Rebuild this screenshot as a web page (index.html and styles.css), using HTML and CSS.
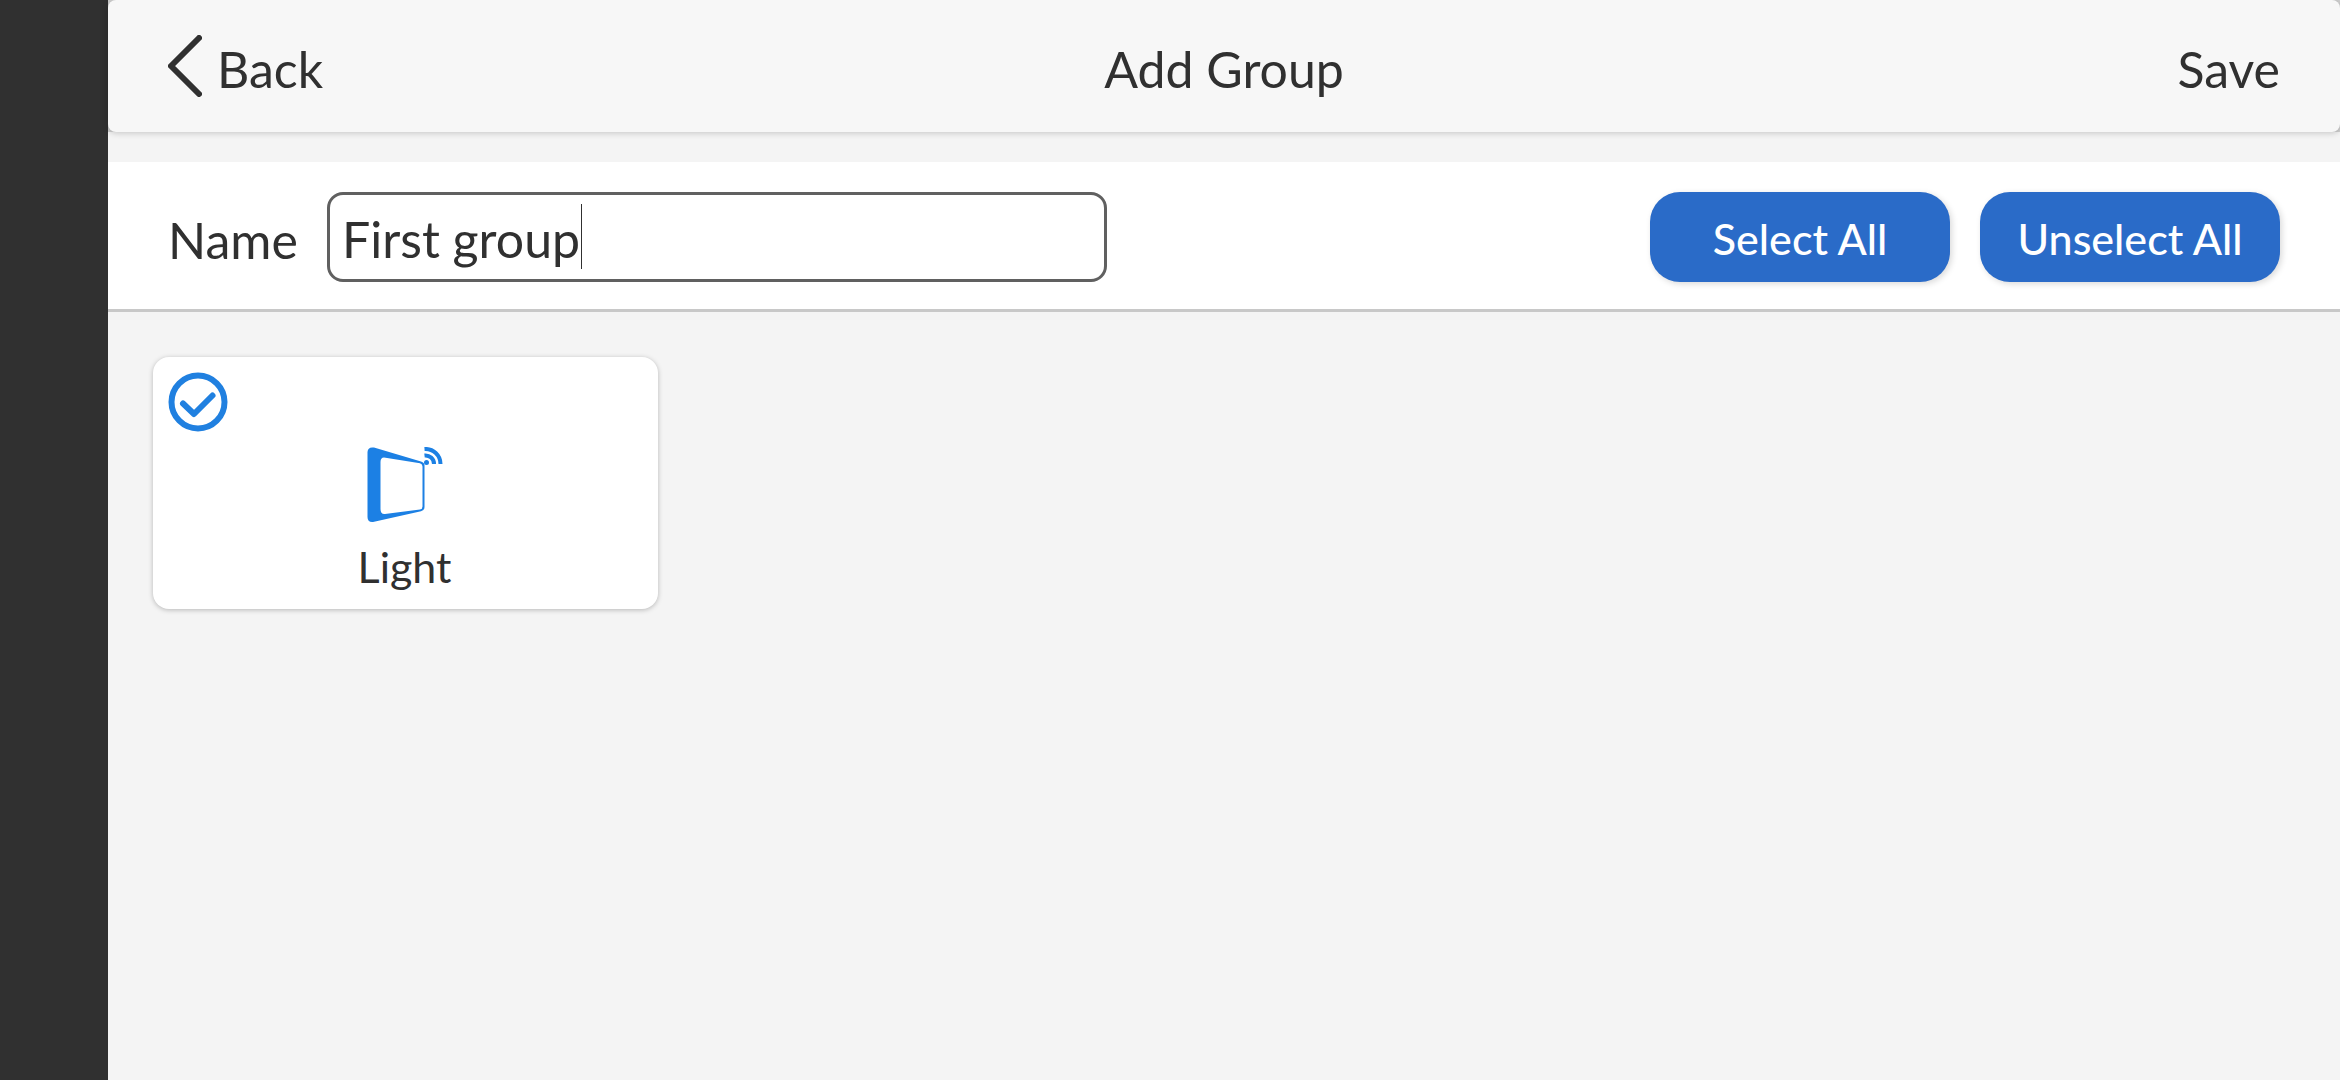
FILE: index.html
```html
<!DOCTYPE html>
<html lang="en">
<head>
<meta charset="utf-8">
<meta name="viewport" content="width=device-width, initial-scale=1">
<title>Add Group</title>
<link rel="stylesheet" href="styles.css">
</head>
<body>
<div class="app">
  <header class="header">
    <button class="header-button back" type="button">
      <svg class="back-icon" viewBox="0 0 34 62" aria-hidden="true"><path d="M31 3 3 31 31 59"/></svg>
      Back
    </button>
    <h1 class="title">Add Group</h1>
    <button class="header-button save" type="button">Save</button>
  </header>
  <main class="main">
    <form class="toolbar">
      <label class="label" for="group-name">Name</label>
      <div class="field">
        <input class="input" id="group-name" type="text" value="First group">
        <span class="caret" aria-hidden="true"></span>
      </div>
      <div class="actions">
        <button class="action" type="button">Select All</button>
        <button class="action" type="button">Unselect All</button>
      </div>
    </form>
    <div class="devices">
      <button class="device" type="button" aria-pressed="true">
        <svg class="check" viewBox="0 0 60 60" aria-hidden="true"><circle cx="30" cy="30" r="26.5"/><path d="M15 31.5 26 42 44.500 23.500"/></svg>
        <svg class="device-icon" viewBox="0 0 76 76" aria-hidden="true">
          <path fill-rule="evenodd" d="M7 .6 54 14.500Q57.500 15.500 57.500 18.500V60Q57.500 63.500 54 64.300L6 75Q.5 75.500.5 70V5Q1-.5 7 .6ZM17 10.500Q13.500 10.500 13.500 15V62Q13.500 67.500 18 67L53 62.500Q55.500 62 55.500 59.500V19.500Q55.500 17 53 16.300Z"/>
          <circle cx="59.500" cy="15.500" r="2.500"/>
          <path class="wave" d="M57.500 8.500A8.500 8.500 0 0 1 67 17M57.500 2A15 15 0 0 1 73.500 17"/>
        </svg>
        <span class="device-name">Light</span>
      </button>
    </div>
  </main>
</div>
</body>
</html>
```
FILE: styles.css
```css
* {
  box-sizing: border-box;
}

body {
  margin: 0;
  background: #303030;
  color: #303030;
  font-family: Lato, "Noto Sans", sans-serif;
  font-size: 50px;
  line-height: 60px;
}

button,
input {
  border: 0;
  background: none;
  color: inherit;
  font: inherit;
}

.app {
  min-height: 100vh;
  margin-left: 108px;
  background: linear-gradient(#cfcfcf 132px, #f4f4f4 132px);
}

.header {
  display: grid;
  grid-template-columns: 1fr auto 1fr;
  align-items: center;
  height: 132px;
  padding: 6px 60px 0;
  border-radius: 8px;
  background: #f7f7f7;
  box-shadow: 0 1px 6px rgba(0, 0, 0, 0.2);
}

.header-button {
  padding: 0;
}

.back {
  display: flex;
  align-items: center;
  gap: 15px;
  justify-self: start;
}

.back-icon {
  width: 34px;
  height: 62px;
  margin-bottom: 6px;
  fill: none;
  stroke: #303030;
  stroke-width: 6;
  stroke-linecap: round;
  stroke-linejoin: round;
}

.title {
  margin: 0;
  font-size: 50px;
  font-weight: 400;
}

.save {
  justify-self: end;
}

.main {
  padding-top: 30px;
}

.toolbar {
  display: flex;
  align-items: center;
  padding: 30px 60px 27px;
  border-bottom: 3px solid #c8c8c8;
  background: #fff;
}

.label {
  flex: none;
  min-width: 159px;
  padding-top: 6px;
}

.field {
  position: relative;
  flex: 0 1 780px;
}

.input {
  display: block;
  width: 100%;
  height: 90px;
  padding: 4px 12px 0;
  border: 3px solid #606060;
  border-radius: 16px;
  outline: 0;
}

.caret {
  position: absolute;
  top: 12px;
  left: 254px;
  width: 1px;
  height: 65px;
  background: #303030;
}

.actions {
  display: flex;
  gap: 30px;
  margin-left: auto;
}

.action {
  width: 300px;
  height: 90px;
  padding: 4px 0 0;
  border-radius: 30px;
  background: #2a6bc8;
  box-shadow: 2px 2px 6px rgba(0, 0, 0, 0.15);
  color: #fff;
  font-size: 43px;
  font-weight: 500;
}

.devices {
  display: grid;
  grid-template-columns: repeat(auto-fill, 505px);
  gap: 30px;
  padding: 45px;
}

.device {
  position: relative;
  display: flex;
  flex-direction: column;
  align-items: center;
  height: 252px;
  padding: 90px 16px 0 14px;
  border-radius: 16px;
  background: #fff;
  box-shadow: 0 1px 5px rgba(0, 0, 0, 0.25);
  font-size: 43px;
}

.check {
  position: absolute;
  top: 15px;
  left: 15px;
  width: 60px;
  height: 60px;
  fill: none;
  stroke: #2080e0;
  stroke-width: 6;
  stroke-linecap: round;
  stroke-linejoin: round;
}

.device-icon {
  width: 76px;
  height: 76px;
  fill: #1c80e4;
}

.wave {
  fill: none;
  stroke: #1c80e4;
  stroke-width: 4;
}

.device-name {
  margin-top: 14px;
}
```
